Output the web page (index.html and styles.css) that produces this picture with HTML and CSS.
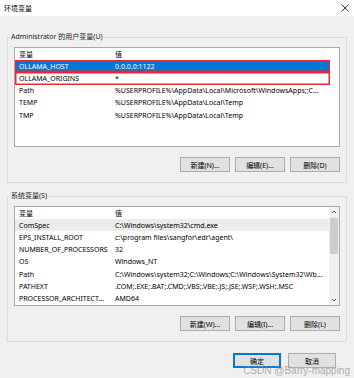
FILE: index.html
```html
<!DOCTYPE html>
<html lang="zh-CN">
<head>
    <meta charset="UTF-8">
    <title>环境变量</title>
    <link rel="stylesheet" href="styles.css">
</head>
<body>
    <div class="titlebar">
        <span>环境变量</span>
        <svg class="close" width="8" height="8" viewBox="0 0 8 8"><path d="M0.5 0.5L7.5 7.5M7.5 0.5L0.5 7.5" stroke="#000" stroke-width="0.8"/></svg>
    </div>
    <div class="main">
        <fieldset class="group">
            <legend>Administrator 的用户变量(U)</legend>
            <div class="list">
                <div class="cols">
                    <div class="row head"><span class="name">变量</span><span class="val">值</span></div>
                    <div class="row selected marked"><span class="name">OLLAMA_HOST</span><span class="val">0.0.0.0:1122</span></div>
                    <div class="row marked"><span class="name">OLLAMA_ORIGINS</span><span class="val">*</span></div>
                    <div class="row"><span class="name">Path</span><span class="val">%USERPROFILE%\AppData\Local\Microsoft\WindowsApps;;C...</span></div>
                    <div class="row"><span class="name">TEMP</span><span class="val">%USERPROFILE%\AppData\Local\Temp</span></div>
                    <div class="row"><span class="name">TMP</span><span class="val">%USERPROFILE%\AppData\Local\Temp</span></div>
                </div>
            </div>
            <div class="buttons">
                <button>新建(N)...</button>
                <button>编辑(E)...</button>
                <button>删除(D)</button>
            </div>
        </fieldset>
        <fieldset class="group second">
            <legend>系统变量(S)</legend>
            <div class="list">
                <div class="cols">
                    <div class="row head"><span class="name">变量</span><span class="val">值</span></div>
                    <div class="row hover"><span class="name">ComSpec</span><span class="val">C:\Windows\system32\cmd.exe</span></div>
                    <div class="row"><span class="name">EPS_INSTALL_ROOT</span><span class="val">c:\program files\sangfor\edr\agent\</span></div>
                    <div class="row"><span class="name">NUMBER_OF_PROCESSORS</span><span class="val">32</span></div>
                    <div class="row"><span class="name">OS</span><span class="val">Windows_NT</span></div>
                    <div class="row"><span class="name">Path</span><span class="val">C:\Windows\system32;C:\Windows;C:\Windows\System32\Wb...</span></div>
                    <div class="row"><span class="name">PATHEXT</span><span class="val">.COM;.EXE;.BAT;.CMD;.VBS;.VBE;.JS;.JSE;.WSF;.WSH;.MSC</span></div>
                    <div class="row"><span class="name">PROCESSOR_ARCHITECT...</span><span class="val">AMD64</span></div>
                </div>
                <div class="scrollbar">
                    <svg class="arrow" width="10" height="10" viewBox="0 0 10 10"><path d="M3 6L5 4L7 6" fill="none" stroke="#606060" stroke-width="1"/></svg>
                    <div class="thumb"></div>
                    <div class="track"></div>
                    <svg class="arrow" width="10" height="10" viewBox="0 0 10 10"><path d="M3 4L5 6L7 4" fill="none" stroke="#606060" stroke-width="1"/></svg>
                </div>
            </div>
            <div class="buttons">
                <button>新建(W)...</button>
                <button>编辑(I)...</button>
                <button>删除(L)</button>
            </div>
        </fieldset>
        <div class="footer">
            <button class="default">确定</button>
            <button>取消</button>
        </div>
    </div>
    <div class="watermark">CSDN @Barry-mapping</div>
</body>
</html>
```

FILE: styles.css
```css
body {
    margin: 0;
    width: 354px;
    height: 378px;
    position: relative;
    overflow: hidden;
    background-color: #f0f0f0;
    font-family: "Noto Sans", "Noto Sans CJK SC", sans-serif;
    font-size: 7px;
    color: #000;
}
.titlebar {
    height: 16px;
    background-color: #fff;
    display: flex;
    align-items: center;
    justify-content: space-between;
    padding: 0 5px 0 4px;
}
.main {
    padding: 16px 7px 0 7px;
}
.group {
    margin: 0;
    padding: 5px 6px 10px 6px;
    border: 1px solid #dcdcdc;
    min-width: 0;
}
.group legend {
    margin-left: -4px;
    padding: 0 1px;
    height: 10px;
    line-height: 10px;
    color: #1a1a1a;
}
.second {
    margin-top: 8px;
}
.list {
    height: 98px;
    border: 1px solid #a8a8a8;
    background-color: #fff;
    display: flex;
    overflow: hidden;
}
.cols {
    width: 315px;
}
.row {
    display: flex;
    align-items: center;
    height: 12.25px;
    white-space: nowrap;
    position: relative;
}
.row.head {
    height: 12px;
}
.row .name {
    width: 93px;
    padding-left: 4px;
    overflow: hidden;
}
.row .val {
    padding-left: 3px;
    overflow: hidden;
}
.selected {
    background-color: #0078d7;
    color: #fff;
}
.marked {
    box-shadow: inset 0 0 0 1.5px #e5283a;
}
.hover {
    background-color: #ececec;
}
.scrollbar {
    margin-left: auto;
    width: 10px;
    background-color: #f0f0f0;
    display: flex;
    flex-direction: column;
    align-items: center;
}
.thumb {
    width: 8px;
    height: 36px;
    margin-top: 1px;
    background-color: #cdcdcd;
}
.track {
    flex: 1;
}
.buttons {
    display: flex;
    justify-content: flex-end;
    gap: 5px;
    margin-top: 10px;
}
button {
    width: 50px;
    height: 15px;
    padding: 0;
    font-family: inherit;
    font-size: 7px;
    color: #000;
    background-color: #e1e1e1;
    border: 1px solid #adadad;
}
.footer {
    display: flex;
    justify-content: flex-end;
    gap: 7px;
    padding: 11px 11px 0 0;
}
.footer button {
    width: 48px;
}
.footer .default {
    border: 1px solid #0078d7;
    box-shadow: inset 0 0 0 1px #0078d7;
}
.watermark {
    position: absolute;
    right: 4px;
    bottom: 2px;
    font-family: "Liberation Sans", sans-serif;
    font-size: 10px;
    color: rgba(140, 140, 140, 0.7);
}
```
